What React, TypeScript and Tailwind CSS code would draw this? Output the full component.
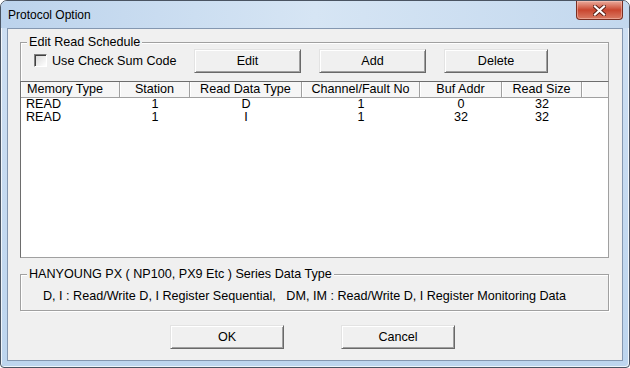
const columns = [
  { title: "Memory Type", width: "w-[99px]", align: "text-left pl-[6px]" },
  { title: "Station", width: "w-[70px]", align: "text-center" },
  { title: "Read Data Type", width: "w-[112px]", align: "text-center" },
  { title: "Channel/Fault No", width: "w-[118px]", align: "text-center" },
  { title: "Buf Addr", width: "w-[82px]", align: "text-center" },
  { title: "Read Size", width: "w-[80px]", align: "text-center" },
]

const rows = [
  ["READ", "1", "D", "1", "0", "32"],
  ["READ", "1", "I", "1", "32", "32"],
]

function Button({ label, className }: { label: string; className: string }) {
  return (
    <button
      className={`${className} flex h-[24px] items-center justify-center border border-t-[#e3e3e3] border-l-[#e3e3e3] border-r-[#696969] border-b-[#696969] bg-[#f0f0f0] text-[12.6px] text-black shadow-[inset_1px_1px_0_#ffffff,inset_-1px_-1px_0_#a0a0a0]`}
    >
      {label}
    </button>
  )
}

function CloseButton() {
  return (
    <div className="mr-[6px] flex h-[19px] w-[47px] items-center justify-center rounded-b-[4px] border border-t-0 border-[#7a2f22] bg-gradient-to-b from-[#e9aa9c] via-[#c9452e] to-[#d97a64] shadow-[inset_0_0_0_1px_rgba(255,210,200,0.45)]">
      <svg width="13" height="11" viewBox="0 0 13 11">
        <path d="M2 1.5 L11 9.5 M11 1.5 L2 9.5" stroke="#5a1f16" strokeWidth="4" strokeLinecap="square" />
        <path d="M2 1.5 L11 9.5 M11 1.5 L2 9.5" stroke="#ffffff" strokeWidth="2.2" strokeLinecap="square" />
      </svg>
    </div>
  )
}

export default function App() {
  return (
    <div className="h-[368px] w-[630px] font-['Liberation_Sans',Arial,sans-serif] text-[12.6px] text-black">
      <div className="flex h-full flex-col rounded-t-[7px] rounded-b-[4px] border border-[#4a5462] bg-gradient-to-b from-[#cfe0f3] to-[#bdd5ee] shadow-[inset_1px_1px_0_rgba(255,255,255,0.75),inset_-1px_-1px_0_rgba(255,255,255,0.75)]">
        {/* title bar */}
        <div className="flex h-[27px] items-start justify-between rounded-t-[6px] bg-gradient-to-r from-[#bcd3ec] via-[#d6e5f4] to-[#c3d8ee]">
          <span className="mt-[7px] pl-[7px] text-[12px] leading-[14px]">Protocol Option</span>
          <CloseButton />
        </div>

        {/* client area */}
        <div className="mx-[6px] mb-[6px] flex flex-1 flex-col border border-[#8497b0] bg-[#f0f0f0]">
          <fieldset className="ml-[12px] mr-[13px] mt-[6px] border border-b-0 border-[#a0a0a0] shadow-[inset_1px_1px_0_#ffffff]">
            <legend className="ml-[6px] bg-[#f0f0f0] px-[2px] leading-[14px]">Edit Read Schedule</legend>
            <div className="flex h-[24px] items-center">
              <label className="flex w-[173px] shrink-0 items-center pl-[13px]">
                <span className="h-[13px] w-[13px] border border-t-[#808080] border-l-[#808080] border-r-white border-b-white bg-gradient-to-br from-[#d8d8d8] to-[#ffffff] shadow-[inset_1px_1px_0_#404040]" />
                <span className="ml-[5px]">Use Check Sum Code</span>
              </label>
              <Button label="Edit" className="w-[107px]" />
              <Button label="Add" className="ml-[18px] w-[107px]" />
              <Button label="Delete" className="ml-[18px] w-[104px]" />
            </div>

            <div className="-mx-px mt-[8px] flex h-[177px] flex-col border border-t-[#6d6d6d] border-l-[#6d6d6d] border-r-[#a0a0a0] border-b-[#a0a0a0] bg-white">
              <div className="flex h-[16px] border-b border-[#a0a0a0] bg-[#f6f6f6]">
                {columns.map((c) => (
                  <div
                    key={c.title}
                    className={`${c.width} ${c.align} h-[15px] shrink-0 border-r border-[#a0a0a0] leading-[15px] shadow-[inset_1px_0_0_#ffffff]`}
                  >
                    {c.title}
                  </div>
                ))}
                <div className="flex-1 shadow-[inset_1px_0_0_#ffffff]" />
              </div>
              {rows.map((r, i) => (
                <div key={i} className="flex h-[13px] leading-[13px]">
                  {r.map((v, j) => (
                    <div
                      key={j}
                      className={`${columns[j].width} shrink-0 ${j === 0 ? "pl-[5px] text-left" : "text-center"}`}
                    >
                      {v}
                    </div>
                  ))}
                </div>
              ))}
            </div>
          </fieldset>

          <fieldset className="ml-[12px] mr-[13px] mt-[9px] border border-[#a0a0a0] shadow-[inset_1px_1px_0_#ffffff,1px_1px_0_#ffffff]">
            <legend className="ml-[6px] bg-[#f0f0f0] px-[2px] leading-[14px]">
              HANYOUNG PX ( NP100, PX9 Etc ) Series Data Type
            </legend>
            <div className="whitespace-pre pb-[7px] pl-[22px] pt-[8px] leading-[14px]">
              {"D, I : Read/Write D, I Register Sequential,   DM, IM : Read/Write D, I Register Monitoring Data"}
            </div>
          </fieldset>

          <div className="mt-[14px] flex">
            <Button label="OK" className="ml-[162px] w-[114px]" />
            <Button label="Cancel" className="ml-[57px] w-[114px]" />
          </div>
        </div>
      </div>
    </div>
  )
}
